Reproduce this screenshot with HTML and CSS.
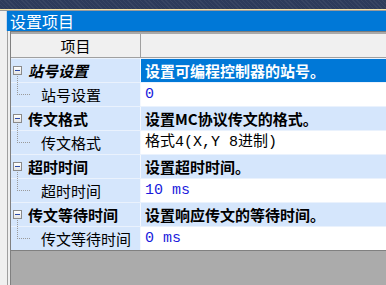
FILE: index.html
```html
<!DOCTYPE html>
<html lang="zh-CN">

<head>
    <meta charset="UTF-8">
    <meta name="viewport" content="width=device-width, initial-scale=1.0">
    <title>设置项目</title>
    <link rel="stylesheet" href="styles.css">
</head>

<body>
    <div class="top-band"></div>
    <div class="title-bar">
        <div class="title-edge"></div>
        <div class="title-text">设置项目</div>
    </div>
    <div class="main">
        <div class="gutter"></div>
        <div class="frame">
            <div class="grid">
                <div class="head">
                    <div class="cell-l">项目</div>
                    <div class="cell-r"></div>
                </div>

                <div class="row cat">
                    <div class="cell-l"><span class="box"></span><span class="cat-name italic">站号设置</span></div>
                    <div class="cell-r selected">设置可编程控制器的站号。</div>
                </div>
                <div class="row item">
                    <div class="cell-l"><span class="elbow"></span>站号设置</div>
                    <div class="cell-r value num">0</div>
                </div>

                <div class="row cat">
                    <div class="cell-l"><span class="box"></span><span class="cat-name">传文格式</span></div>
                    <div class="cell-r">设置MC协议传文的格式。</div>
                </div>
                <div class="row item">
                    <div class="cell-l"><span class="elbow"></span>传文格式</div>
                    <div class="cell-r value">格式4(X,Y 8进制)</div>
                </div>

                <div class="row cat">
                    <div class="cell-l"><span class="box"></span><span class="cat-name">超时时间</span></div>
                    <div class="cell-r">设置超时时间。</div>
                </div>
                <div class="row item">
                    <div class="cell-l"><span class="elbow"></span>超时时间</div>
                    <div class="cell-r value num">10 ms</div>
                </div>

                <div class="row cat">
                    <div class="cell-l"><span class="box"></span><span class="cat-name">传文等待时间</span></div>
                    <div class="cell-r">设置响应传文的等待时间。</div>
                </div>
                <div class="row item">
                    <div class="cell-l"><span class="elbow"></span>传文等待时间</div>
                    <div class="cell-r value num">0 ms</div>
                </div>

                <div class="empty"></div>
            </div>
        </div>
    </div>
</body>

</html>
```

FILE: styles.css
```css
* {
    box-sizing: border-box;
}

body,
html {
    margin: 0;
    padding: 0;
    height: 100%;
    overflow: hidden;
    background-color: #f0f0f0;
    font-family: "Noto Sans CJK SC", sans-serif;
    font-size: 15px;
}

body {
    display: flex;
    flex-direction: column;
}

.top-band {
    height: 10px;
    background-color: #2d3b5b;
    background-image: repeating-linear-gradient(45deg, rgba(255, 255, 255, 0.05) 0 1px, transparent 1px 3px);
    border-bottom: 1px solid #f2e2a6;
    box-shadow: 0 1px 0 #9a9a9a;
    margin-bottom: 1px;
}

.title-bar {
    display: flex;
    height: 20px;
    background-color: #0078d7;
}

.title-edge {
    width: 7px;
    background-color: #f0f0f0;
    border-right: 1px solid #c8d8ee;
}

.title-text {
    padding-left: 3px;
    color: #ffffff;
    font-size: 16px;
    line-height: 20px;
}

.main {
    flex: 1;
    display: flex;
}

.gutter {
    width: 8px;
    border-right: 1px solid #a0a0a0;
}

.frame {
    flex: 1;
    display: flex;
    padding-left: 2px;
}

.grid {
    flex: 1;
    display: flex;
    flex-direction: column;
    border-left: 1px solid #808080;
    border-top: 1px solid #7c7c7c;
}

.head,
.row {
    display: flex;
    flex-shrink: 0;
    line-height: 23px;
}

.head {
    height: 26px;
    border-top: 2px solid #a9a9a9;
    border-bottom: 1px solid #a0a0a0;
    background-color: #f0f0f0;
    color: #000000;
}

.row {
    height: 24px;
    border-top: 1px solid #eaf2fd;
}

.cell-l {
    width: 130px;
    flex-shrink: 0;
    position: relative;
    display: flex;
    align-items: center;
    white-space: nowrap;
}

.head .cell-l {
    justify-content: center;
    border-right: 1px solid #a0a0a0;
}

.row .cell-l {
    background-color: #d5e6fc;
    border-right: 1px solid #f4f8fe;
}

.cell-r {
    flex: 1;
    padding-left: 4px;
    white-space: nowrap;
    overflow: hidden;
}

.cat .cell-l {
    padding-left: 2px;
    font-weight: bold;
}

.cat .cell-r {
    background-color: #d5e6fc;
    font-weight: bold;
}

.cat .cell-r.selected {
    background-color: #0078d7;
    color: #ffffff;
}

.italic {
    font-style: italic;
}

.box {
    width: 9px;
    height: 9px;
    border: 1px solid #8a8a8a;
    background: linear-gradient(#ffffff, #e4e4e4);
    margin-right: 6px;
    position: relative;
}

.box::after {
    content: "";
    position: absolute;
    left: 1px;
    right: 1px;
    top: 3px;
    height: 1px;
    background-color: #2b4aa8;
}

.item .cell-l {
    padding-left: 30px;
}

.elbow {
    position: absolute;
    left: 6px;
    top: -7px;
    width: 13px;
    height: 19px;
    border-left: 1px dotted #9a9a9a;
    border-bottom: 1px dotted #9a9a9a;
}

.item .cell-r {
    background-color: #ffffff;
}

.value {
    font-family: "Liberation Mono", "Noto Sans CJK SC", monospace;
    font-size: 15px;
}

.num {
    color: #1a1adc;
}

.empty {
    flex: 1;
    background-color: #ababab;
    border-top: 1px solid #808080;
}
```
